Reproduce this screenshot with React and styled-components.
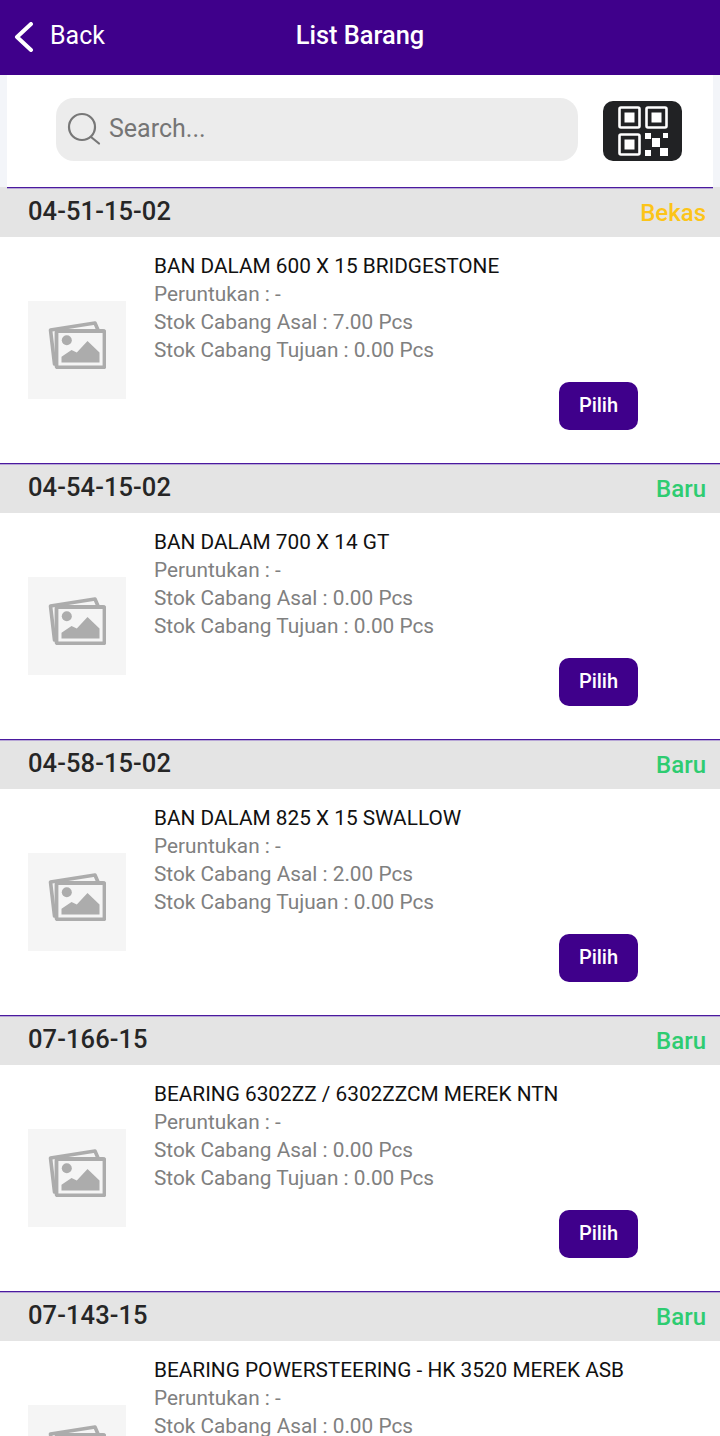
import React from 'react';
import styled, { createGlobalStyle } from 'styled-components';

const GlobalStyle = createGlobalStyle`
  html, body {
    margin: 0;
    padding: 0;
    background: #fff;
    font-family: Roboto, "Liberation Sans", sans-serif;
  }
`;

const Page = styled.div`
  width: 720px;
  height: 1436px;
  overflow: hidden;
`;

const Header = styled.div`
  height: 75px;
  background: #3f008b;
  display: grid;
  grid-template-columns: 1fr auto 1fr;
  align-items: center;
  color: #fff;
  box-sizing: border-box;
  padding-bottom: 5px;
`;

const BackLink = styled.div`
  display: flex;
  align-items: center;
  gap: 14px;
  padding-left: 14px;
  font-size: 25px;

  svg {
    margin-top: 4px;
  }
`;

const Title = styled.div`
  font-size: 25.4px;
  font-weight: 500;
`;

const SearchArea = styled.div`
  height: 112px;
  margin: 0 7px;
  display: flex;
  align-items: flex-start;
  box-sizing: border-box;
  padding: 23px 31px 0 49px;
  justify-content: space-between;
  background: #fff;
  box-shadow: -7px 0 0 #f3f5f9, 7px 0 0 #f3f5f9;
`;

const SearchBox = styled.div`
  width: 522px;
  height: 63px;
  background: #ececec;
  border-radius: 18px;
  display: flex;
  align-items: center;
  gap: 8px;
  padding: 0 0 2px 11px;
  box-sizing: border-box;
  color: #757575;
  font-size: 25px;
`;

const QrButton = styled.div`
  width: 79px;
  height: 60px;
  margin-top: 3px;
  background: #212224;
  border-radius: 10px;
  display: flex;
  align-items: center;
  justify-content: center;
`;

const Group = styled.div`
  height: 276px;
`;

const GroupHead = styled.div`
  height: 50px;
  box-sizing: border-box;
  background: linear-gradient(#4a1a9e 0 1px, #b7a6d6 1px 2px) ${p => (p.$first ? '7px' : '0')} 0 / ${p => (p.$first ? '706px' : '100%')} 2px no-repeat, #e4e4e4;
  display: flex;
  align-items: center;
  justify-content: space-between;
  padding: 0 14px 2px 28px;
`;

const Code = styled.div`
  font-size: 25.5px;
  font-weight: 500;
  color: #262626;
  letter-spacing: 0.1px;
`;

const Condition = styled.div`
  font-size: 24px;
  font-weight: 500;
  margin-top: 3px;
  color: ${p => (p.$used ? '#fcc419' : '#2ecc71')};
`;

const Item = styled.div`
  height: 226px;
  position: relative;
  display: flex;
  padding: 15px 0 0 28px;
  box-sizing: border-box;
  gap: 28px;
`;

const Thumb = styled.div`
  width: 98px;
  height: 98px;
  margin-top: 49px;
  padding-bottom: 11px;
  box-sizing: border-box;
  flex: none;
  background: #f5f5f5;
  display: flex;
  align-items: center;
  justify-content: center;
`;

const Info = styled.div`
  display: flex;
  flex-direction: column;
  font-size: 20.8px;
  line-height: 28px;
  color: #808080;
`;

const Name = styled.div`
  color: #111;
`;

const PickButton = styled.div`
  position: absolute;
  left: 559px;
  top: 145px;
  width: 79px;
  height: 48px;
  padding-bottom: 2px;
  box-sizing: border-box;
  background: #3f008b;
  border-radius: 10px;
  color: #fff;
  font-size: 20px;
  font-weight: 500;
  display: flex;
  align-items: center;
  justify-content: center;
`;

const items = [
  { code: '04-51-15-02', cond: 'Bekas', name: 'BAN DALAM 600 X 15 BRIDGESTONE', asal: '7.00' },
  { code: '04-54-15-02', cond: 'Baru', name: 'BAN DALAM 700 X 14 GT', asal: '0.00' },
  { code: '04-58-15-02', cond: 'Baru', name: 'BAN DALAM 825 X 15 SWALLOW', asal: '2.00' },
  { code: '07-166-15', cond: 'Baru', name: 'BEARING 6302ZZ / 6302ZZCM MEREK NTN', asal: '0.00' },
  { code: '07-143-15', cond: 'Baru', name: 'BEARING POWERSTEERING - HK 3520 MEREK ASB', asal: '0.00' },
];

const BackIcon = () => (
  <svg width="22" height="30" viewBox="0 0 22 30" fill="none" stroke="#fff" strokeWidth="4" strokeLinecap="round" strokeLinejoin="round">
    <path d="M17 2 L3 15 L17 28" />
  </svg>
);

const SearchIcon = () => (
  <svg width="34" height="34" viewBox="0 0 34 34" fill="none" stroke="#777" strokeWidth="2.2" strokeLinecap="round">
    <circle cx="15" cy="15" r="13" />
    <path d="M24 25 L32 31.5" />
  </svg>
);

const QrIcon = () => (
  <svg width="50" height="50" viewBox="0 0 50 50" fill="none">
    <g stroke="#fff" strokeWidth="2.6">
      <rect x="1.5" y="1.5" width="20" height="20" rx="1.5" />
      <rect x="28.5" y="1.5" width="20" height="20" rx="1.5" />
      <rect x="1.5" y="28.5" width="20" height="20" rx="1.5" />
    </g>
    <g fill="#fff">
      <rect x="6.5" y="6.5" width="10" height="10" />
      <rect x="33.5" y="6.5" width="10" height="10" />
      <rect x="6.5" y="33.5" width="10" height="10" />
      <rect x="27" y="27" width="6" height="6" />
      <rect x="45" y="27" width="5" height="5" />
      <rect x="34" y="32" width="8" height="9" />
      <rect x="27" y="44" width="6" height="6" />
      <rect x="42" y="42" width="8" height="8" />
    </g>
  </svg>
);

const PictureIcon = () => (
  <svg width="58" height="48" viewBox="0 0 58 48" fill="none">
    <path d="M6.5 43 L2.5 9 L47 2 L50 9" stroke="#acacac" strokeWidth="3.6" strokeLinecap="round" strokeLinejoin="round" />
    <rect x="8.5" y="10" width="48" height="36.5" rx="1.5" stroke="#acacac" strokeWidth="3.8" fill="#f5f5f5" />
    <circle cx="18.8" cy="19.3" r="5" fill="#acacac" />
    <path d="M13.5 41.5 V35.7 L23.5 29 L28.8 31.6 L39.5 20 L51.5 31.6 V41.5 Z" fill="#acacac" />
  </svg>
);

export default function App() {
  return (
    <Page>
      <GlobalStyle />
      <Header>
        <BackLink>
          <BackIcon />
          Back
        </BackLink>
        <Title>List Barang</Title>
        <div />
      </Header>
      <SearchArea>
        <SearchBox>
          <SearchIcon />
          Search...
        </SearchBox>
        <QrButton>
          <QrIcon />
        </QrButton>
      </SearchArea>
      {items.map((item, i) => (
        <Group key={item.code}>
          <GroupHead $first={i === 0}>
            <Code>{item.code}</Code>
            <Condition $used={item.cond === 'Bekas'}>{item.cond}</Condition>
          </GroupHead>
          <Item>
            <Thumb>
              <PictureIcon />
            </Thumb>
            <Info>
              <Name>{item.name}</Name>
              <span>Peruntukan : -</span>
              <span>Stok Cabang Asal : {item.asal} Pcs</span>
              <span>Stok Cabang Tujuan : 0.00 Pcs</span>
            </Info>
            <PickButton>Pilih</PickButton>
          </Item>
        </Group>
      ))}
    </Page>
  );
}
